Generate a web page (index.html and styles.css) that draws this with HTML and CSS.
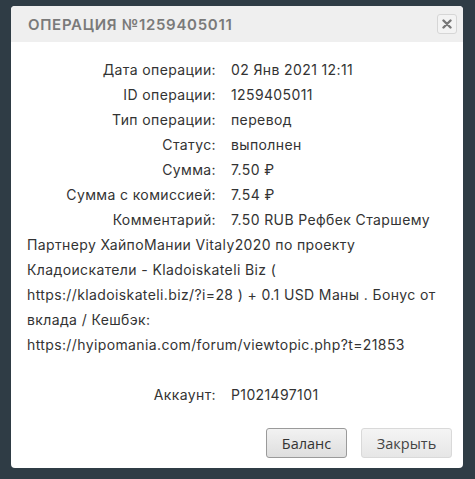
FILE: index.html
```html
<!DOCTYPE html>
<html lang="ru">
<head>
<meta charset="utf-8">
<link rel="stylesheet" href="styles.css">
</head>
<body>
<div class="dialog">
  <div class="dialog-head">
    <div class="dialog-title">Операция №1259405011</div>
    <button class="close-btn" aria-label="close">
      <svg width="10" height="10" viewBox="0 0 10 10"><path d="M1.5 1.5 L8.5 8.5 M8.5 1.5 L1.5 8.5" stroke="#777" stroke-width="2.4" stroke-linecap="round"/></svg>
    </button>
  </div>
  <div class="dialog-body">
    <div class="row"><span class="label">Дата операции:</span>02 Янв 2021 12:11</div>
    <div class="row"><span class="label">ID операции:</span>1259405011</div>
    <div class="row"><span class="label">Тип операции:</span>перевод</div>
    <div class="row"><span class="label">Статус:</span>выполнен</div>
    <div class="row"><span class="label">Сумма:</span>7.50 ₽</div>
    <div class="row"><span class="label">Сумма с комиссией:</span>7.54 ₽</div>
    <div class="row"><span class="label">Комментарий:</span>7.50 RUB Рефбек Старшему Партнеру ХайпоМании Vitaly2020 по проекту Кладоискатели - Kladoiskateli Biz ( <span class="nowrap">https://kladoiskateli.biz/?i=28</span> ) + 0.1 USD Маны . Бонус от вклада / Кешбэк: <span class="nowrap">https://hyipomania.com/forum/viewtopic.php?t=21853</span></div>
    <div class="row spacer"></div>
    <div class="row"><span class="label">Аккаунт:</span>P1021497101</div>
  </div>
  <div class="dialog-foot">
    <button class="btn btn-primary">Баланс</button>
    <button class="btn">Закрыть</button>
  </div>
</div>
</body>
</html>
```
FILE: styles.css
```css
html, body { margin: 0; padding: 0; }
body {
  background: #2f3c45;
  width: 475px;
  height: 479px;
  padding: 6px 12px 0 11px;
  box-sizing: border-box;
  font-family: "Inter", "Liberation Sans", sans-serif;
}
.dialog {
  background: #fff;
  border-radius: 4px;
  overflow: hidden;
  height: 462px;
  display: flex;
  flex-direction: column;
}
.dialog-head {
  background: #efefef;
  height: 36px;
  display: flex;
  align-items: center;
  justify-content: space-between;
  padding: 0 6px 0 17px;
}
.dialog-title {
  text-transform: uppercase;
  font-weight: 600;
  font-size: 15px;
  letter-spacing: 0.7px;
  color: #7a7a7a;
}
.close-btn {
  width: 20px;
  height: 20px;
  padding: 0;
  border: 1px solid #d6d6d6;
  border-radius: 3px;
  background: #f3f3f3;
  display: flex;
  align-items: center;
  justify-content: center;
}
.dialog-body {
  padding: 15px 22px 0 16px;
  font-size: 14px;
  letter-spacing: 0.38px;
  line-height: 25px;
  color: #333;
  flex: 1;
}
.row { min-height: 25px; }
.spacer { height: 25px; }
.nowrap { white-space: nowrap; }
.label {
  display: inline-block;
  width: 189px;
  text-align: right;
  margin-right: 15px;
}
.dialog-foot {
  display: flex;
  justify-content: flex-end;
  gap: 14px;
  padding: 0 11px 10px 0;
}
.btn {
  height: 30px;
  padding: 0 14px;
  font-family: "Open Sans", "Liberation Sans", sans-serif;
  font-size: 14.5px;
  color: #444;
  background: linear-gradient(#f4f4f4, #e6e6e6);
  border: 1px solid #d9d9d9;
  border-radius: 3px;
  min-width: 91px;
}
.btn-primary {
  min-width: 81px;
  border-color: #9a9a9a;
  background: linear-gradient(#f2f2f2, #dedede);
  color: #333;
}
```
